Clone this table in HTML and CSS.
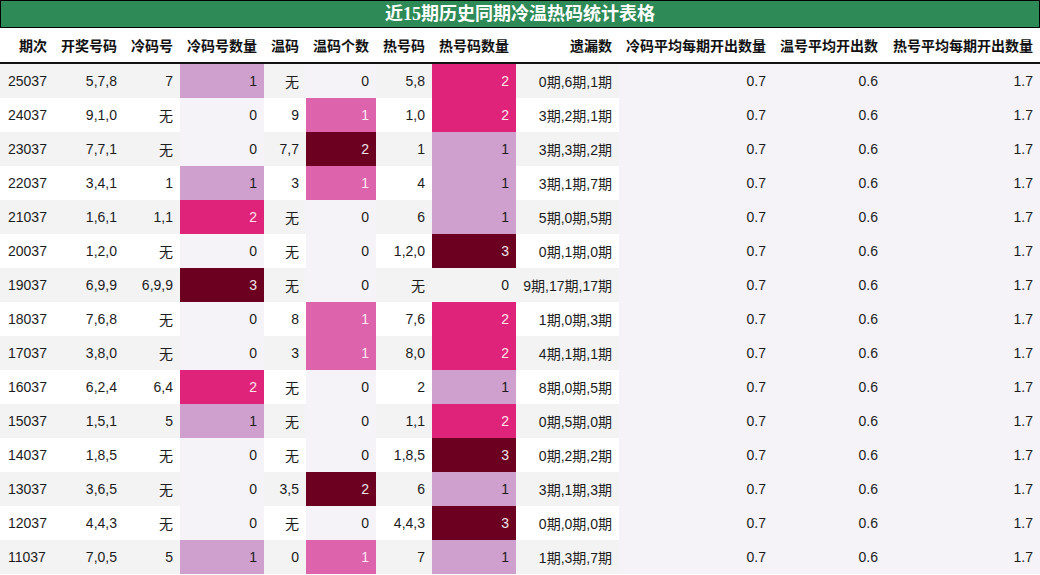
FILE: index.html
```html
<!DOCTYPE html>
<html lang="zh">
<head>
<meta charset="utf-8">
<title>近15期历史同期冷温热码统计表格</title>
<link rel="stylesheet" href="styles.css">
</head>
<body>
<div class="sheet">
  <div class="title">近15期历史同期冷温热码统计表格</div>
  <table class="grid">
    <colgroup>
      <col class="w54"><col class="w70"><col class="w56"><col class="w84"><col class="w42"><col class="w70"><col class="w56"><col class="w84"><col class="w103"><col class="w154"><col class="w112"><col class="w155">
    </colgroup>
    <thead>
      <tr><th>期次</th><th>开奖号码</th><th>冷码号</th><th>冷码号数量</th><th>温码</th><th>温码个数</th><th>热号码</th><th>热号码数量</th><th>遗漏数</th><th>冷码平均每期开出数量</th><th>温号平均开出数</th><th>热号平均每期开出数量</th></tr>
    </thead>
    <tbody>
      <tr class="odd"><td>25037</td><td>5,7,8</td><td>7</td><td class="c-l">1</td><td>无</td><td class="c-z">0</td><td>5,8</td><td class="c-p">2</td><td>0期,6期,1期</td><td class="avg">0.7</td><td class="avg">0.6</td><td class="avg">1.7</td></tr>
      <tr><td>24037</td><td>9,1,0</td><td>无</td><td class="c-z">0</td><td>9</td><td class="c-w">1</td><td>1,0</td><td class="c-p">2</td><td>3期,2期,1期</td><td class="avg">0.7</td><td class="avg">0.6</td><td class="avg">1.7</td></tr>
      <tr class="odd"><td>23037</td><td>7,7,1</td><td>无</td><td class="c-z">0</td><td>7,7</td><td class="c-m">2</td><td>1</td><td class="c-l">1</td><td>3期,3期,2期</td><td class="avg">0.7</td><td class="avg">0.6</td><td class="avg">1.7</td></tr>
      <tr><td>22037</td><td>3,4,1</td><td>1</td><td class="c-l">1</td><td>3</td><td class="c-w">1</td><td>4</td><td class="c-l">1</td><td>3期,1期,7期</td><td class="avg">0.7</td><td class="avg">0.6</td><td class="avg">1.7</td></tr>
      <tr class="odd"><td>21037</td><td>1,6,1</td><td>1,1</td><td class="c-p">2</td><td>无</td><td class="c-z">0</td><td>6</td><td class="c-l">1</td><td>5期,0期,5期</td><td class="avg">0.7</td><td class="avg">0.6</td><td class="avg">1.7</td></tr>
      <tr><td>20037</td><td>1,2,0</td><td>无</td><td class="c-z">0</td><td>无</td><td class="c-z">0</td><td>1,2,0</td><td class="c-m">3</td><td>0期,1期,0期</td><td class="avg">0.7</td><td class="avg">0.6</td><td class="avg">1.7</td></tr>
      <tr class="odd"><td>19037</td><td>6,9,9</td><td>6,9,9</td><td class="c-m">3</td><td>无</td><td class="c-z">0</td><td>无</td><td>0</td><td>9期,17期,17期</td><td class="avg">0.7</td><td class="avg">0.6</td><td class="avg">1.7</td></tr>
      <tr><td>18037</td><td>7,6,8</td><td>无</td><td class="c-z">0</td><td>8</td><td class="c-w">1</td><td>7,6</td><td class="c-p">2</td><td>1期,0期,3期</td><td class="avg">0.7</td><td class="avg">0.6</td><td class="avg">1.7</td></tr>
      <tr class="odd"><td>17037</td><td>3,8,0</td><td>无</td><td class="c-z">0</td><td>3</td><td class="c-w">1</td><td>8,0</td><td class="c-p">2</td><td>4期,1期,1期</td><td class="avg">0.7</td><td class="avg">0.6</td><td class="avg">1.7</td></tr>
      <tr><td>16037</td><td>6,2,4</td><td>6,4</td><td class="c-p">2</td><td>无</td><td class="c-z">0</td><td>2</td><td class="c-l">1</td><td>8期,0期,5期</td><td class="avg">0.7</td><td class="avg">0.6</td><td class="avg">1.7</td></tr>
      <tr class="odd"><td>15037</td><td>1,5,1</td><td>5</td><td class="c-l">1</td><td>无</td><td class="c-z">0</td><td>1,1</td><td class="c-p">2</td><td>0期,5期,0期</td><td class="avg">0.7</td><td class="avg">0.6</td><td class="avg">1.7</td></tr>
      <tr><td>14037</td><td>1,8,5</td><td>无</td><td class="c-z">0</td><td>无</td><td class="c-z">0</td><td>1,8,5</td><td class="c-m">3</td><td>0期,2期,2期</td><td class="avg">0.7</td><td class="avg">0.6</td><td class="avg">1.7</td></tr>
      <tr class="odd"><td>13037</td><td>3,6,5</td><td>无</td><td class="c-z">0</td><td>3,5</td><td class="c-m">2</td><td>6</td><td class="c-l">1</td><td>3期,1期,3期</td><td class="avg">0.7</td><td class="avg">0.6</td><td class="avg">1.7</td></tr>
      <tr><td>12037</td><td>4,4,3</td><td>无</td><td class="c-z">0</td><td>无</td><td class="c-z">0</td><td>4,4,3</td><td class="c-m">3</td><td>0期,0期,0期</td><td class="avg">0.7</td><td class="avg">0.6</td><td class="avg">1.7</td></tr>
      <tr class="odd"><td>11037</td><td>7,0,5</td><td>5</td><td class="c-l">1</td><td>0</td><td class="c-w">1</td><td>7</td><td class="c-l">1</td><td>1期,3期,7期</td><td class="avg">0.7</td><td class="avg">0.6</td><td class="avg">1.7</td></tr>
    </tbody>
  </table>
</div>
</body>
</html>
```

FILE: styles.css
```css
html, body {
  margin: 0;
  padding: 0;
  background: #ffffff;
}

.sheet {
  width: 1040px;
  font-family: "Liberation Sans", "Noto Sans CJK SC", sans-serif;
  color: #1c1c1c;
}

.title {
  box-sizing: border-box;
  height: 28px;
  background: #2e8b57;
  border: 1px solid #000;
  color: #ffffff;
  font-family: "Liberation Serif", "Noto Sans CJK SC", serif;
  font-weight: bold;
  font-size: 18px;
  line-height: 26px;
  text-align: center;
}

.grid {
  width: 1040px;
  table-layout: fixed;
  border-collapse: collapse;
  border-spacing: 0;
}

.w54 { width: 54px; }
.w56 { width: 56px; }
.w70 { width: 70px; }
.w84 { width: 84px; }
.w42 { width: 42px; }
.w103 { width: 103px; }
.w154 { width: 154px; }
.w112 { width: 112px; }
.w155 { width: 155px; }

.grid th,
.grid td {
  padding: 0 7px 0 0;
  text-align: right;
  white-space: nowrap;
  overflow: hidden;
  font-size: 14px;
}

.grid th {
  height: 34px;
  font-weight: bold;
  color: #111;
  border-bottom: 2px solid #111;
  background: #ffffff;
}

.grid td {
  height: 34px;
  background: #ffffff;
}

.grid tr.odd td {
  background: #f3f3f3;
}

.grid td:first-child {
  text-align: left;
  padding-left: 8px;
}

.grid td.avg,
.grid tr.odd td.avg {
  background: #f5f3f8;
}

.grid td.c-z,
.grid tr.odd td.c-z {
  background: #f5f3f8;
}

.grid td.c-l,
.grid tr.odd td.c-l {
  background: #cf9fcd;
  color: #1c1c1c;
}

.grid td.c-w,
.grid tr.odd td.c-w {
  background: #de63ad;
  color: #fbe9f3;
}

.grid td.c-p,
.grid tr.odd td.c-p {
  background: #e0237a;
  color: #fbe6ee;
}

.grid td.c-m,
.grid tr.odd td.c-m {
  background: #6b0020;
  color: #f2e4e8;
}
```
